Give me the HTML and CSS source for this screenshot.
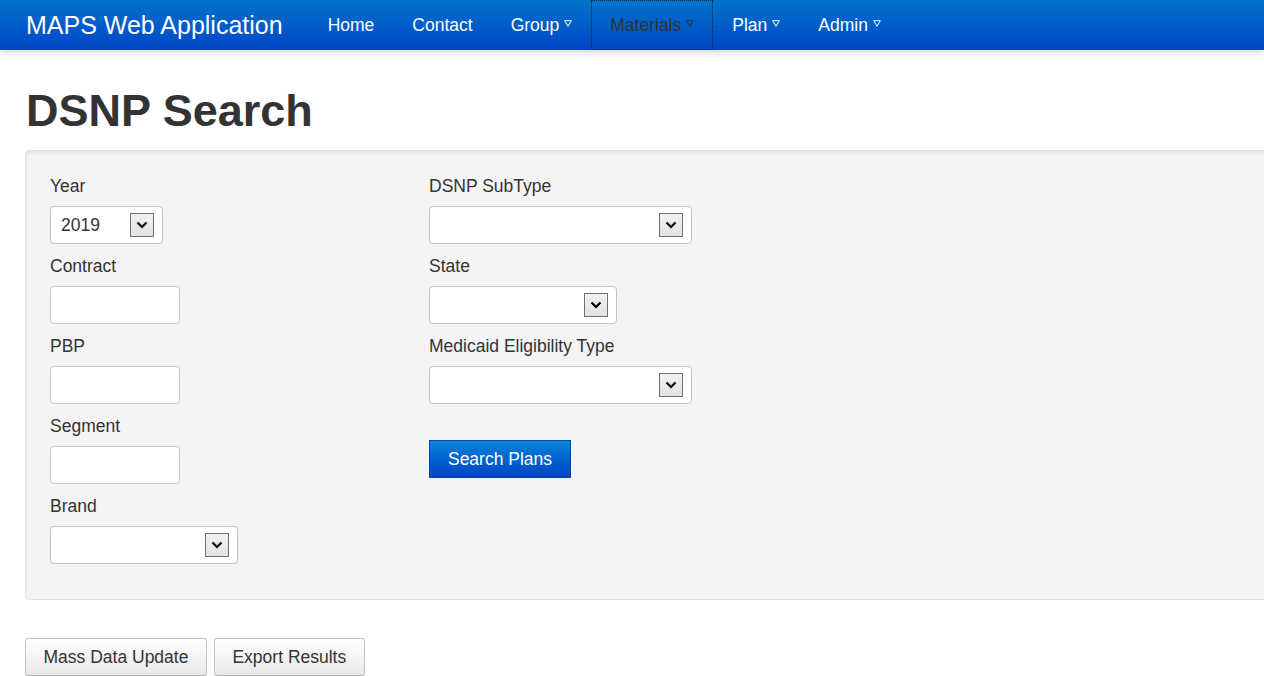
FILE: index.html
```html
<!DOCTYPE html>
<html>
<head>
<meta charset="utf-8">
<title>DSNP Search</title>
<link rel="stylesheet" href="styles.css">
</head>
<body>
<header class="navbar">
  <a class="brand">MAPS Web Application</a>
  <nav class="nav">
    <a class="nav-item">Home</a>
    <a class="nav-item">Contact</a>
    <a class="nav-item">Group <svg class="caret" width="8" height="7" viewBox="0 0 8 7"><polygon points="0.7,0.7 7.3,0.7 4,6.3" fill="none" stroke="currentColor" stroke-width="1"/></svg></a>
    <a class="nav-item active">Materials <svg class="caret" width="8" height="7" viewBox="0 0 8 7"><polygon points="0.7,0.7 7.3,0.7 4,6.3" fill="none" stroke="currentColor" stroke-width="1"/></svg></a>
    <a class="nav-item">Plan <svg class="caret" width="8" height="7" viewBox="0 0 8 7"><polygon points="0.7,0.7 7.3,0.7 4,6.3" fill="none" stroke="currentColor" stroke-width="1"/></svg></a>
    <a class="nav-item">Admin <svg class="caret" width="8" height="7" viewBox="0 0 8 7"><polygon points="0.7,0.7 7.3,0.7 4,6.3" fill="none" stroke="currentColor" stroke-width="1"/></svg></a>
  </nav>
</header>

<main class="page">
  <h1 class="title">DSNP Search</h1>

  <section class="well">
    <div class="col col-left">
      <div class="field">
        <label class="label">Year</label>
        <div class="select w-year"><span class="value">2019</span><span class="arrow"><svg width="12" height="8" viewBox="0 0 12 8"><path d="M1.5 1.5 L6 6 L10.5 1.5" fill="none" stroke="#000" stroke-width="2.2"/></svg></span></div>
      </div>
      <div class="field">
        <label class="label">Contract</label>
        <div class="input"></div>
      </div>
      <div class="field">
        <label class="label">PBP</label>
        <div class="input"></div>
      </div>
      <div class="field">
        <label class="label">Segment</label>
        <div class="input"></div>
      </div>
      <div class="field">
        <label class="label">Brand</label>
        <div class="select w-brand"><span class="value"></span><span class="arrow"><svg width="12" height="8" viewBox="0 0 12 8"><path d="M1.5 1.5 L6 6 L10.5 1.5" fill="none" stroke="#000" stroke-width="2.2"/></svg></span></div>
      </div>
    </div>

    <div class="col col-right">
      <div class="field">
        <label class="label">DSNP SubType</label>
        <div class="select w-wide"><span class="value"></span><span class="arrow"><svg width="12" height="8" viewBox="0 0 12 8"><path d="M1.5 1.5 L6 6 L10.5 1.5" fill="none" stroke="#000" stroke-width="2.2"/></svg></span></div>
      </div>
      <div class="field">
        <label class="label">State</label>
        <div class="select w-brand"><span class="value"></span><span class="arrow"><svg width="12" height="8" viewBox="0 0 12 8"><path d="M1.5 1.5 L6 6 L10.5 1.5" fill="none" stroke="#000" stroke-width="2.2"/></svg></span></div>
      </div>
      <div class="field">
        <label class="label">Medicaid Eligibility Type</label>
        <div class="select w-wide"><span class="value"></span><span class="arrow"><svg width="12" height="8" viewBox="0 0 12 8"><path d="M1.5 1.5 L6 6 L10.5 1.5" fill="none" stroke="#000" stroke-width="2.2"/></svg></span></div>
      </div>
      <div class="actions">
        <button class="btn-primary">Search Plans</button>
      </div>
    </div>
  </section>

  <div class="toolbar">
    <button class="btn">Mass Data Update</button>
    <button class="btn">Export Results</button>
  </div>
</main>
</body>
</html>
```

FILE: styles.css
```css
html, body {
  margin: 0;
  padding: 0;
  overflow: hidden;
}
body {
  font-family: "Liberation Sans", Arial, sans-serif;
  color: #333;
  background: #fff;
  font-size: 17.5px;
}

.navbar {
  height: 50px;
  display: flex;
  align-items: stretch;
  background: linear-gradient(to bottom, #0074cb 0%, #0045c8 100%);
  box-shadow: 0 2px 8px rgba(0, 0, 0, 0.18);
  position: relative;
  z-index: 2;
}
.brand {
  color: #fff;
  font-size: 25px;
  line-height: 50px;
  padding-left: 26px;
  margin-right: 26px;
  white-space: nowrap;
}
.nav {
  display: flex;
}
.nav-item {
  color: #fff;
  font-size: 17.5px;
  line-height: 50px;
  padding: 0 19px;
  white-space: nowrap;
  display: flex;
  align-items: center;
  box-sizing: border-box;
  height: 50px;
}
.nav-item .caret {
  margin-left: 5px;
  margin-top: -3px;
}
.nav-item.active {
  color: #333;
  outline: 1px dotted #222;
  outline-offset: -1px;
}

.page {
  padding-left: 25px;
  width: 1280px;
}
.title {
  font-size: 45px;
  font-weight: bold;
  line-height: 50px;
  margin: 36px 0 14px 1px;
  color: #333;
}

.well {
  box-sizing: border-box;
  height: 450px;
  background: #f4f4f4;
  border: 1px solid #e1e1e1;
  border-radius: 4px;
  box-shadow: inset 0 2px 3px rgba(0, 0, 0, 0.06);
  padding: 25px 24px;
  display: flex;
}
.col-left {
  width: 379px;
}
.col-right {
  width: 300px;
}
.field {
  margin-bottom: 12px;
}
.label {
  display: block;
  line-height: 20px;
  height: 20px;
  margin-bottom: 10px;
}

.input {
  box-sizing: border-box;
  width: 130px;
  height: 38px;
  background: #fff;
  border: 1px solid #c8c8c8;
  border-radius: 4px;
}
.select {
  box-sizing: border-box;
  height: 38px;
  background: #fff;
  border: 1px solid #c3c3c3;
  border-radius: 4px;
  display: flex;
  align-items: center;
  justify-content: space-between;
  padding: 0 8px 0 10px;
}
.select .value {
  font-size: 17.5px;
  color: #333;
}
.select .arrow {
  box-sizing: border-box;
  width: 24px;
  height: 24px;
  border: 1px solid #707070;
  background: linear-gradient(to bottom, #f2f2f2, #e2e2e2);
  display: flex;
  align-items: center;
  justify-content: center;
}
.w-year { width: 113px; }
.w-brand { width: 188px; }
.w-wide { width: 263px; }

.actions {
  padding-top: 24px;
}
.btn-primary {
  font-family: "Liberation Sans", Arial, sans-serif;
  font-size: 17.5px;
  color: #fff;
  height: 38px;
  width: 142px;
  border: 1px solid #0047b5;
  border-radius: 0;
  background: linear-gradient(to bottom, #0a86d6 0%, #0062cf 50%, #0046c6 100%);
  padding: 0;
  cursor: pointer;
}

.toolbar {
  display: flex;
  gap: 7px;
  margin-top: 38px;
}
.btn {
  font-family: "Liberation Sans", Arial, sans-serif;
  font-size: 17.5px;
  color: #333;
  height: 38px;
  padding: 0 17.5px;
  background: linear-gradient(to bottom, #ffffff 0%, #e9e9e9 100%);
  border: 1px solid #c5c5c5;
  border-bottom-color: #b3b3b3;
  border-radius: 3px;
}
```
